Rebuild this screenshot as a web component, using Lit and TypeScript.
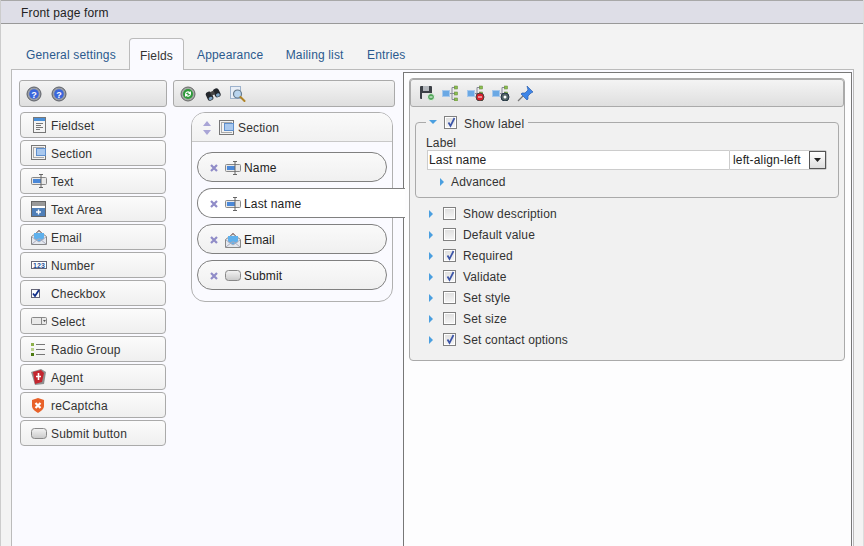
import { LitElement, html, css, svg } from "lit";
import { customElement } from "lit/decorators.js";

const S = (w: number, h: number, body: unknown) =>
  html`<svg class="ic" width=${w} height=${h} viewBox="0 0 ${w} ${h}">${body}</svg>`;

const help = () => S(16, 16, svg`
  <circle cx="8" cy="8" r="7" fill="#9a9ea6" stroke="#5c5f66"/>
  <circle cx="8" cy="8" r="4.800" fill="#3a66dc"/>
  <text x="8" y="11.500" font-size="9" font-weight="700" text-anchor="middle" fill="#fff" font-family="Liberation Sans">?</text>`);
const refresh = () => S(16, 16, svg`
  <circle cx="8" cy="8" r="7" fill="#a5aaa5" stroke="#666"/>
  <circle cx="8" cy="8" r="5" fill="#2f9a3a"/>
  <path d="M5 8a3 3 0 0 1 5-2l1-1v3H8l1-1a2 2 0 0 0-3 1zM11 8a3 3 0 0 1-5 2l-1 1V8h3l-1 1a2 2 0 0 0 3-1z" fill="#fff"/>`);
const binoculars = () => S(16, 14, svg`
  <g transform="rotate(-25 8 7)">
    <rect x="1" y="3" width="6" height="9" rx="2.500" fill="#23272c"/>
    <rect x="9" y="3" width="6" height="9" rx="2.500" fill="#23272c"/>
    <rect x="6" y="4" width="4" height="4" fill="#444"/>
    <ellipse cx="4" cy="10" rx="2" ry="1.600" fill="#7fa6c6"/>
    <ellipse cx="12" cy="10" rx="2" ry="1.600" fill="#7fa6c6"/>
  </g>`);
const preview = () => S(16, 16, svg`
  <rect x="0.500" y="0.500" width="10" height="12" fill="#e8eef6" stroke="#9db2cc"/>
  <circle cx="7.500" cy="8" r="4" fill="#b8d4ee" stroke="#667a8c" stroke-width="1.200"/>
  <path d="M10.500 11l4 4" stroke="#b08428" stroke-width="2" stroke-linecap="round"/>`);

const fieldset = () => S(16, 16, svg`
  <rect x="2.500" y="0.500" width="12" height="15" fill="#f4f4f4" stroke="#777"/>
  <rect x="3" y="1" width="11" height="3" fill="#4a90d9"/>
  <path d="M5 6.500h7M5 8.500h5M5 10.500h7M5 12.500h4" stroke="#777"/>`);
const section = () => S(16, 16, svg`
  <rect x="0.500" y="0.500" width="14" height="14" fill="#f2f2f2" stroke="#777"/>
  <rect x="5.500" y="3.500" width="9" height="7" fill="#a9c8ee" stroke="#5f8fcc"/>
  <path d="M2 2.500h11M2.500 3v9M2 12.500h11" stroke="#aaa"/>`);
const textIc = () => S(16, 16, svg`
  <rect x="0.500" y="4.500" width="15" height="7" rx="1" fill="#e8e8e8" stroke="#888"/>
  <rect x="2" y="6" width="8" height="4" fill="#4a88d8"/>
  <path d="M8 1.500h4M10 1.500v13M8 14.500h4" stroke="#666" fill="none"/>`);
const textArea = () => S(16, 16, svg`
  <rect x="0.500" y="0.500" width="14" height="15" fill="#fff" stroke="#666"/>
  <rect x="1" y="1" width="13" height="4" fill="#999"/>
  <rect x="1" y="7" width="13" height="8" fill="#4f7fb8"/>
  <path d="M5 11h5M7.500 8.500v5" stroke="#fff" stroke-width="1.400"/>`);
const email = () => S(16, 16, svg`
  <path d="M5 4l3-3 3 3z" fill="#c9a777" stroke="#a88"/>
  <path d="M0.500 7.500L8 2l7.500 5.500v8h-15z" fill="#e4e8ee" stroke="#888"/>
  <path d="M3 4h10v6l-5 3-5-3z" fill="#5fb0ec"/>
  <path d="M1 15l6-5h2l6 5M1 8l7 5 7-5" fill="none" stroke="#aab"/>`);
const number = () => S(16, 8, svg`
  <rect x="0.500" y="0.500" width="15" height="7" fill="#fff" stroke="#667"/>
  <text x="8" y="7" font-size="7" font-weight="700" text-anchor="middle" fill="#1f4f99" font-family="Liberation Sans">123</text>`);
const checkIc = () => S(9, 9, svg`
  <rect x="0.500" y="0.500" width="8" height="8" fill="#fff" stroke="#667"/>
  <path d="M2 4.500l2 2.500 4-6" fill="none" stroke="#13318c" stroke-width="1.800"/>`);
const selectIc = () => S(16, 8, svg`
  <rect x="0.500" y="0.500" width="15" height="7" rx="1" fill="#e9e9e9" stroke="#888"/>
  <path d="M10.500 1v6" stroke="#888"/>
  <path d="M12 3h3l-1.500 2z" fill="#555"/>`);
const radio = () => S(14, 13, svg`
  <rect x="0" y="0" width="3" height="3" fill="#8db04a"/>
  <rect x="0" y="5" width="3" height="3" fill="#b9cf8a"/>
  <rect x="0" y="10" width="3" height="3" fill="#4c7a12"/>
  <path d="M5 1.500h9M5 6.500h9M5 11.500h9" stroke="#777"/>`);
const agent = () => S(15, 16, svg`
  <path d="M0 3l10-3 5 3-2 12-9 1z" fill="#8f8f8f"/>
  <path d="M2 3l8-2 3 3-2 9-7 2z" fill="#c4262f"/>
  <path d="M7.500 4v7M5 7.500h5" stroke="#fff" stroke-width="1.600"/>`);
const shield = () => S(14, 15, svg`
  <path d="M1 2l6-2 6 2v6c0 3-3 5-6 7-3-2-6-4-6-7z" fill="#e8622a"/>
  <path d="M4.500 5l5 5M9.500 5l-5 5" stroke="#fff" stroke-width="2.200"/>`);
const submit = () => S(16, 11, svg`
  <defs><linearGradient id="sb" x1="0" y1="0" x2="0" y2="1"><stop offset="0" stop-color="#f4f4f4"/><stop offset="1" stop-color="#c9c9c9"/></linearGradient></defs>
  <rect x="0.500" y="0.500" width="15" height="10" rx="3" fill="url(#sb)" stroke="#888"/>`);

const floppy = () => S(16, 16, svg`
  <rect x="1" y="1" width="12" height="13" rx="1" fill="#3c4046"/>
  <rect x="4" y="1" width="6" height="5" fill="#b4b8bd"/>
  <rect x="3" y="8" width="8" height="6" fill="#e4e4e4"/>
  <circle cx="12" cy="12" r="3.500" fill="#52a65a" stroke="#e8f4e8"/>
  <path d="M10.500 12h3" stroke="#fff"/>`);
const tree = (extra: unknown) => S(18, 16, svg`
  <rect x="0.500" y="5.500" width="7" height="6" fill="#6aa8e4" stroke="#a6c8ec"/>
  <path d="M8 8.500h2M10 2.500v12M10 2.500h3M10 8.500h3M10 14.500h3" stroke="#889" fill="none"/>
  <rect x="12.500" y="1" width="3" height="3" fill="#8cc050" stroke="#5c8030" stroke-width="0.500"/>
  <rect x="12.500" y="7" width="3" height="3" fill="#8cc050" stroke="#5c8030" stroke-width="0.500"/>
  <rect x="12.500" y="13" width="3" height="3" fill="#8cc050" stroke="#5c8030" stroke-width="0.500"/>
  ${extra}`);
const pin = () => S(17, 17, svg`
  <path d="M10 1l6 6-2 1-3 3v3l-1 1-6-6 1-1h3l3-3z" fill="#3f86e8" stroke="#2a5fb0" stroke-width="0.700"/>
  <path d="M6 11l-5 5" stroke="#777" stroke-width="1.300"/>`);

const palette: [string, () => unknown][] = [
  ["Fieldset", fieldset], ["Section", section], ["Text", textIc], ["Text Area", textArea],
  ["Email", email], ["Number", number], ["Checkbox", checkIc], ["Select", selectIc],
  ["Radio Group", radio], ["Agent", agent], ["reCaptcha", shield], ["Submit button", submit],
];
const options: [string, boolean][] = [
  ["Show description", false], ["Default value", false], ["Required", true], ["Validate", true],
  ["Set style", false], ["Set size", false], ["Set contact options", true],
];
const items: [string, () => unknown, boolean][] = [
  ["Name", textIc, false], ["Last name", textIc, true], ["Email", email, false], ["Submit", submit, false],
];

@customElement("app-root")
export class AppRoot extends LitElement {
  static styles = css`
    :host { display: flex; flex-direction: column; box-sizing: border-box; width: 864px; height: 546px; overflow: hidden;
      background: #f3f3f3; font: 12px "Liberation Sans", Arial, sans-serif; color: #333; letter-spacing: 0.15px;
      border-left: 1px solid #ccc; border-right: 1px solid #ddd; }
    * { box-sizing: border-box; }
    .ic { display: block; flex: none; }
    .header { height: 24px; flex: none; background: #dedee7; border-top: 1px solid #a8a8a8; border-bottom: 1px solid #999;
      padding: 1px 0 0 20px; line-height: 22px; color: #222; }
    .tabs { display: flex; flex: none; margin: 14px 0 0 10px; height: 32px; position: relative; z-index: 1; }
    .tab { padding: 10px 10.500px 0 12px; color: #2b5a8e; height: 31px; }
    .tab:last-child { padding-left: 13px; }
    .tab.first { width: 118px; padding: 10px 0 0 15px; }
    .tab.on { height: 32px; width: 55px; padding: 10px 0 0; text-align: center; background: #fafaff; border: 1px solid #bbb;
      border-bottom: 0; border-radius: 4px 4px 0 0; color: #333; margin-right: 1px; }
    .panel { flex: 1; min-height: 0; margin: -1px 9px 0 10px; border: 1px solid #bbb; border-bottom: 0; background: #fafaff;
      display: grid; grid-template-columns: 148px 222px 449px; column-gap: 6px; padding: 2px 0 0 7px; }
    .left { margin-top: 8px; }
    .mid { margin-top: 8px; }
    .bar { height: 27px; display: flex; align-items: center; border: 1px solid #aaa; border-radius: 3px;
      background: linear-gradient(#f4f4f4, #dfdfdf); }
    .left .bar { padding-left: 6px; gap: 9px; margin-bottom: 5px; }
    .btn { height: 26px; width: 146px; margin: 0 0 2px 1px; border: 1px solid #aaa; border-radius: 4px;
      background: linear-gradient(#fbfbfb, #efefef); display: flex; align-items: center; position: relative; padding: 1px 0 0 30px; }
    .btn .slot { position: absolute; left: 10px; top: 0; bottom: 0; width: 20px; display: flex; align-items: center; justify-content: flex-start; }
    .mid .bar { padding-left: 6px; gap: 9px; margin-bottom: 5px; width: 222px; }
    .sec { margin-left: 18px; width: 202px; height: 190px; border: 1px solid #b0b0b0; border-radius: 14px; background: #fafaff; }
    .sec-head { height: 29px; border-bottom: 1px solid #c8c8c8; border-radius: 13px 13px 0 0; background: linear-gradient(#fafafa, #f1f1f1);
      display: flex; align-items: center; padding: 1px 0 0 11px; }
    .updown { width: 8px; margin-right: 8px; display: block; flex: none; }
    .sec-head .lbl { margin-left: 3px; }
    .rows { display: flex; flex-direction: column; gap: 6px; padding: 10px 0 0 5px; }
    .row { height: 30px; width: 190px; border: 1px solid #808080; border-radius: 15px; background: linear-gradient(#fafafa, #f0f0f0);
      display: flex; align-items: center; padding: 1px 0 0 12px; position: relative; }
    .row.sel { width: 208px; background: #fff; border-right: 0; border-radius: 15px 0 0 15px; z-index: 2; }
    .x { margin-right: 7px; }
    .row .lbl { margin-left: 3px; color: #222; }
    .right { border-left: 1px solid #777; border-right: 1px solid #777; border-top: 1px solid #777; background: #fdfdfe;
      margin-left: 2px; padding: 5px 6px 0 5px; width: 449px; }
    .box { height: 283px; border: 1px solid #aaa; border-radius: 4px; background: #f1f1f1; }
    .box .bar { gap: 7px; padding-left: 8px; height: 28px; margin: 0; width: 434px; }
    fieldset { margin: 9px 0 0 5px; padding: 0 0 0 10px; width: 424px; height: 82px; border: 1px solid #aaa; border-radius: 4px; min-inline-size: 0; }
    legend { padding: 0 4px 0 0; margin-left: 0; display: flex; align-items: center; height: 12px; }
    legend .cb { margin-top: 1px; }
    .tri-d { margin: 0 7px 0 3px; }
    .cb { width: 13px; height: 13px; border: 1px solid #808080; box-shadow: inset 0 0 0 1px #fff; background: linear-gradient(#dedede, #f6f6f6); position: relative; flex: none; display: block; }
    .cb svg { position: absolute; left: 1px; top: 0; }
    .legend-text { margin: 4px 0 0 7px; }
    .flabel { line-height: 12px; margin-top: 9px; height: 13px; color: #333; }
    .inputs { display: flex; height: 20px; margin-top: 0; width: 400px; margin-left: 1px; }
    .input { width: 302px; border: 1px solid #ccc; border-right: 0; background: #fff; padding-left: 1px; line-height: 18px; color: #222; }
    .sel-box { flex: 1; display: flex; align-items: center; border: 1px solid #ccc; background: #fff; padding-left: 3px; border-radius: 0 2px 2px 0; color: #222; justify-content: space-between; padding-right: 0; }
    .arrow-btn { width: 17px; height: 18px; border: 1px solid #555; background: linear-gradient(#fff, #ddd); display: flex; align-items: center; justify-content: center; }
    .adv { display: flex; align-items: center; margin: 5px 0 0 14px; height: 14px; }
    .adv span { margin-left: 7px; }
    .opts { padding: 5px 0 0 19px; }
    .opt { display: flex; align-items: center; height: 21px; }
    .opt .cb { margin-left: 10px; }
    .opt span:not(.cb) { margin-left: 7px; color: #333; }
  `;

  private triR() {
    return html`<svg class="ic" width="4" height="8" viewBox="0 0 4 8"><path d="M0 0l4 4-4 4z" fill="#4a9fe0"/></svg>`;
  }
  private triD() {
    return html`<svg class="ic tri-d" width="8" height="4" viewBox="0 0 8 4"><path d="M0 0h8L4 4z" fill="#4a9fe0"/></svg>`;
  }
  private cb(on: boolean) {
    return html`<span class="cb">${on
      ? html`<svg width="11" height="11" viewBox="0 0 11 11"><path d="M2.500 5.500l2 3.500 4-8" fill="none" stroke="#3c55a8" stroke-width="1.700"/></svg>`
      : ""}</span>`;
  }

  render() {
    return html`
      <div class="header">Front page form</div>
      <div class="tabs">
        <div class="tab first">General settings</div>
        <div class="tab on">Fields</div>
        <div class="tab">Appearance</div>
        <div class="tab">Mailing list</div>
        <div class="tab">Entries</div>
      </div>
      <div class="panel">
        <div class="left">
          <div class="bar">${help()}${help()}</div>
          ${palette.map(([t, i]) => html`<div class="btn"><span class="slot">${i()}</span>${t}</div>`)}
        </div>
        <div class="mid">
          <div class="bar">${refresh()}${binoculars()}${preview()}</div>
          <div class="sec">
            <div class="sec-head">
              <svg class="updown" height="14" viewBox="0 0 8 14"><path d="M0 5l4-5 4 5zM0 9h8l-4 5z" fill="#a9a5d6"/></svg>
              ${section()}<span class="lbl">Section</span>
            </div>
            <div class="rows">
              ${items.map(([t, i, s]) => html`<div class="row ${s ? "sel" : ""}">
                <svg class="ic x" width="8" height="8" viewBox="0 0 8 8"><path d="M1 1l6 6M7 1l-6 6" stroke="#908cc8" stroke-width="2.200"/></svg>
                ${i()}<span class="lbl">${t}</span></div>`)}
            </div>
          </div>
        </div>
        <div class="right">
          <div class="box">
            <div class="bar">${floppy()}${tree("")}${tree(svg`<circle cx="13" cy="12" r="4" fill="#d81f2a" stroke="#444"/><path d="M11 12h4" stroke="#fff"/>`)}${tree(svg`<circle cx="13" cy="12" r="4" fill="#566" stroke="#234"/><circle cx="13" cy="12" r="1.500" fill="#fff"/>`)}${pin()}</div>
            <fieldset>
              <legend>${this.triD()}${this.cb(true)}<span class="legend-text">Show label</span></legend>
              <div class="flabel">Label</div>
              <div class="inputs">
                <div class="input">Last name</div>
                <div class="sel-box">left-align-left
                  <span class="arrow-btn"><svg width="7" height="4" viewBox="0 0 7 4"><path d="M0 0h7L3.500 4z" fill="#222"/></svg></span>
                </div>
              </div>
              <div class="adv">${this.triR()}<span>Advanced</span></div>
            </fieldset>
            <div class="opts">
              ${options.map(([t, on]) => html`<div class="opt">${this.triR()}${this.cb(on)}<span>${t}</span></div>`)}
            </div>
          </div>
        </div>
      </div>
    `;
  }
}
